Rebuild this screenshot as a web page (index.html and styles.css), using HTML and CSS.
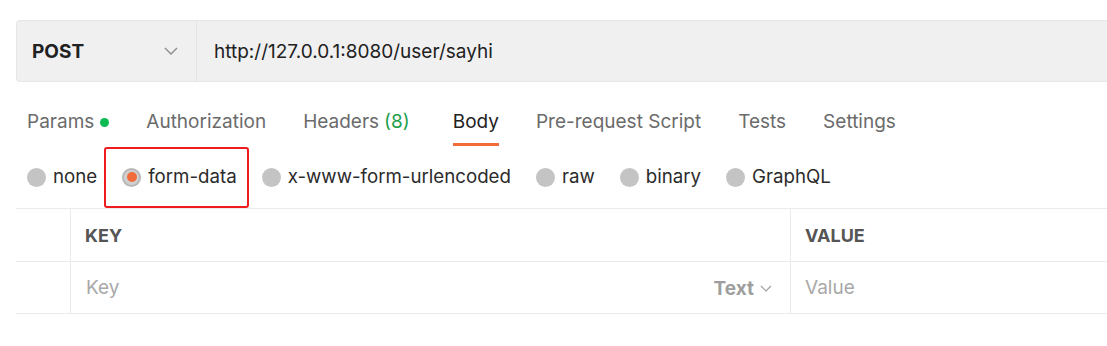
FILE: index.html
```html
<!DOCTYPE html>
<html>
<head>
<meta charset="utf-8">
<link rel="stylesheet" href="styles.css">
</head>
<body>
<div class="page">
  <div class="urlbar">
    <div class="method">
      <span class="method-name">POST</span>
      <svg class="chev" width="14" height="8" viewBox="0 0 14 8"><path d="M1 1 L7 7 L13 1" fill="none" stroke="#8a8a8a" stroke-width="1.3"/></svg>
    </div>
    <div class="url">http://127.0.0.1:8080/user/sayhi</div>
  </div>

  <div class="tabs">
    <div class="tab">Params <span class="dot"></span></div>
    <div class="tab">Authorization</div>
    <div class="tab">Headers <span class="count">(8)</span></div>
    <div class="tab active">Body</div>
    <div class="tab">Pre-request Script</div>
    <div class="tab">Tests</div>
    <div class="tab">Settings</div>
  </div>

  <div class="radios">
    <div class="opt"><span class="radio"></span>none</div>
    <div class="opt selected"><span class="radio"><span class="radio-dot"></span></span>form-data</div>
    <div class="opt"><span class="radio"></span>x-www-form-urlencoded</div>
    <div class="opt"><span class="radio"></span>raw</div>
    <div class="opt"><span class="radio"></span>binary</div>
    <div class="opt"><span class="radio"></span>GraphQL</div>
  </div>

  <div class="table">
    <div class="cell c1"></div>
    <div class="cell c2 head">KEY</div>
    <div class="cell c3 head">VALUE</div>
    <div class="cell c1 row"></div>
    <div class="cell c2 ph row">
      <span>Key</span>
      <span class="type">Text <svg width="12" height="7" viewBox="0 0 12 7"><path d="M1 1 L6 6 L11 1" fill="none" stroke="#a0a0a0" stroke-width="1.2"/></svg></span>
    </div>
    <div class="cell c3 ph row">Value</div>
  </div>
</div>
</body>
</html>
```

FILE: styles.css
```css
* { box-sizing: border-box; }
html, body { margin: 0; padding: 0; background: #ffffff; }
body {
  font-family: Inter, "Noto Sans", "Liberation Sans", sans-serif;
  color: #212121;
  overflow: hidden;
}
.page {
  padding: 20px 0 0 16px;
  width: 1107px;
  height: 346px;
}
.urlbar {
  display: flex;
  height: 62px;
  background: #f0f0f0;
  border: 1px solid #e6e6e6;
  border-right: none;
  border-radius: 4px 0 0 4px;
}
.method {
  width: 180px;
  flex: none;
  display: flex;
  align-items: center;
  justify-content: space-between;
  padding: 0 18px 0 15px;
  border-right: 1px solid #e3e3e3;
}
.method-name {
  font-weight: 700;
  font-size: 19px;
  color: #212121;
}
.url {
  display: flex;
  align-items: center;
  padding-left: 17px;
  font-size: 19px;
  color: #212121;
}
.tabs {
  display: flex;
  gap: 37px;
  padding-left: 11px;
}
.tab {
  padding-top: 28px;
  padding-bottom: 9px;
  line-height: 24px;
  font-size: 19px;
  color: #6b6b6b;
  border-bottom: 3px solid transparent;
  display: flex;
  align-items: center;
}
.tab.active {
  color: #212121;
  border-bottom-color: #f26b3a;
  margin-left: 6px;
}
.dot {
  display: inline-block;
  width: 9px;
  height: 9px;
  border-radius: 50%;
  background: #0cbb52;
  margin-left: 6px;
}
.count {
  color: #1e9e4c;
  margin-left: 5px;
}
.radios {
  display: flex;
  align-items: center;
  height: 62px;
  padding-left: 11px;
  gap: 25px;
}
.opt {
  position: relative;
  display: flex;
  align-items: center;
  gap: 7px;
  font-size: 18.7px;
  line-height: 22px;
  height: 22px;
  color: #2b2b2b;
}
.radio {
  width: 19px;
  height: 19px;
  border-radius: 50%;
  background: #c4c4c4;
  display: flex;
  align-items: center;
  justify-content: center;
}
.selected .radio {
  background: #d0d0d0;
  border: 2px solid #b8b8b8;
}
.radio-dot {
  width: 10px;
  height: 10px;
  border-radius: 50%;
  background: #f26b3a;
}
.selected::after {
  content: "";
  position: absolute;
  left: -18px;
  right: -12px;
  top: -19px;
  bottom: -20px;
  border: 2px solid #ee1c1c;
  border-radius: 3px;
}
.table {
  display: grid;
  grid-template-columns: 55px 720px 1fr;
  border-top: 1px solid #ebebeb;
}
.cell {
  height: 53px;
  border-bottom: 1px solid #ebebeb;
  display: flex;
  align-items: center;
  font-size: 18px;
}
.cell.row { height: 52px; }
.c1, .c2 { border-right: 1px solid #ebebeb; }
.c2 { padding: 0 18px 0 14px; }
.c3 { padding-left: 14px; }
.head {
  font-weight: 700;
  color: #555555;
}
.ph {
  color: #a8a8a8;
  font-size: 19px;
}
.c2.ph { justify-content: space-between; padding-left: 15px; }
.type {
  font-weight: 700;
  color: #9e9e9e;
  display: flex;
  align-items: center;
  gap: 6px;
  padding-top: 2px;
}
```
